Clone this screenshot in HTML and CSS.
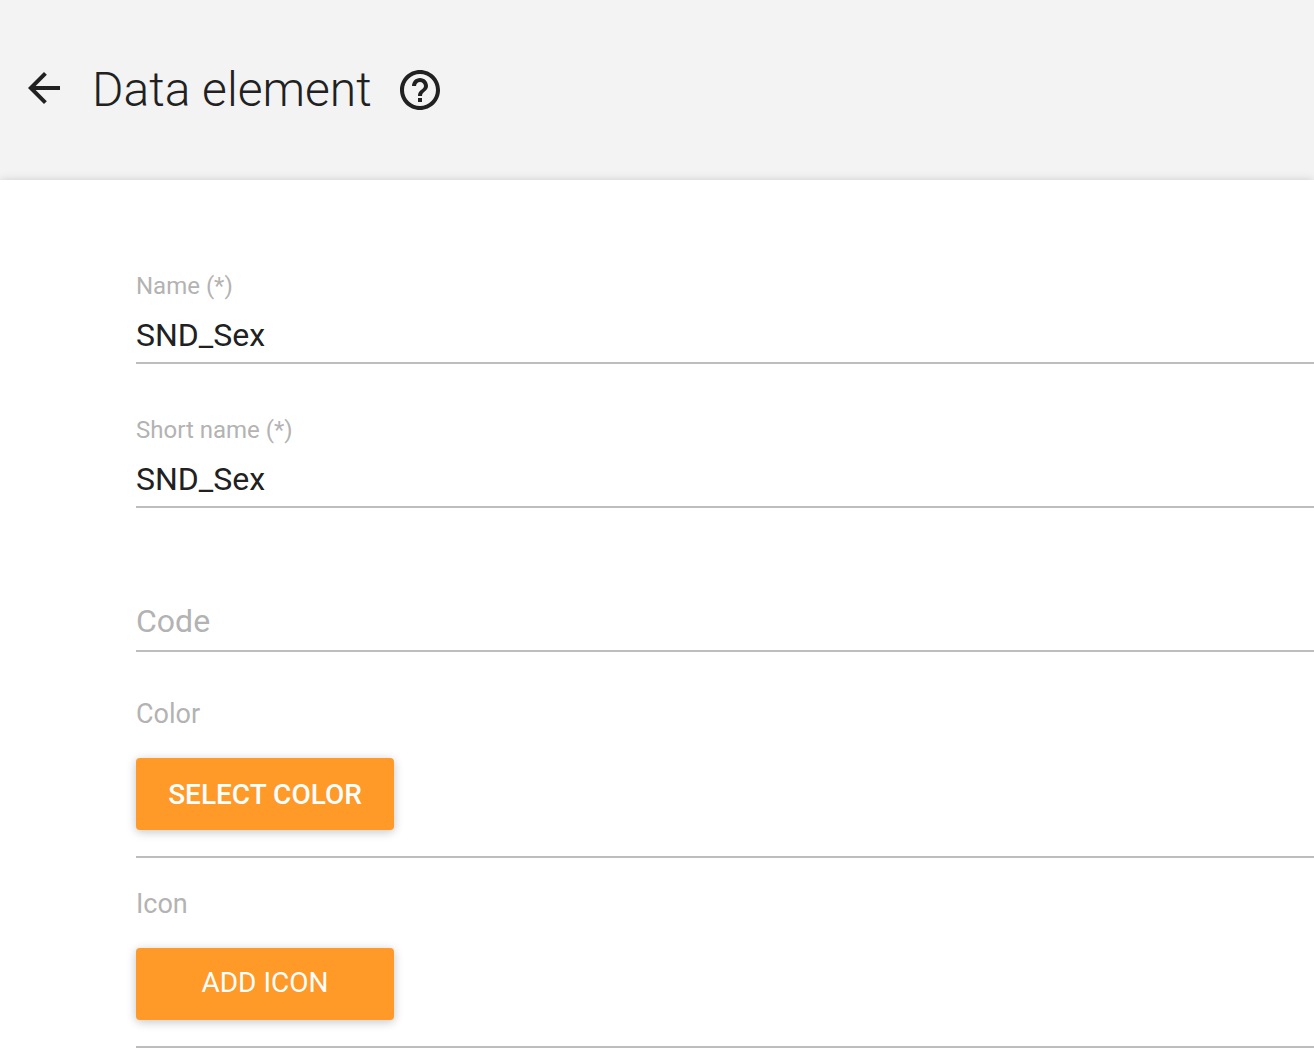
FILE: index.html
```html
<!DOCTYPE html>
<html lang="en">
<head>
<meta charset="utf-8">
<meta name="viewport" content="width=device-width, initial-scale=1">
<title>Data element</title>
<link rel="stylesheet" href="styles.css">
</head>
<body>
<header class="page-header">
  <a class="icon-link back-link" href="#" aria-label="Back">
    <svg class="icon" viewBox="0 0 24 24"><path d="M20 11H7.83l5.59-5.59L12 4l-8 8 8 8 1.41-1.41L7.83 13H20v-2z"/></svg>
  </a>
  <h1 class="page-title">Data element</h1>
  <a class="icon-link" href="#" aria-label="Help">
    <svg class="icon" viewBox="0 0 24 24"><path d="M11 18h2v-2h-2v2zm1-16C6.48 2 2 6.48 2 12s4.480 10 10 10 10-4.480 10-10S17.520 2 12 2zm0 18c-4.410 0-8-3.590-8-8s3.590-8 8-8 8 3.590 8 8-3.590 8-8 8zm0-14c-2.210 0-4 1.790-4 4h2c0-1.100.9-2 2-2s2 .9 2 2c0 2-3 1.750-3 5h2c0-2.250 3-2.500 3-5 0-2.210-1.790-4-4-4z"/></svg>
  </a>
</header>
<main class="card">
  <form>
    <div class="field">
      <label class="field-label" for="name">Name (*)</label>
      <input class="field-input" id="name" type="text" value="SND_Sex">
    </div>
    <div class="field">
      <label class="field-label" for="short-name">Short name (*)</label>
      <input class="field-input" id="short-name" type="text" value="SND_Sex">
    </div>
    <div class="field">
      <input class="field-input field-input-bare" id="code" type="text" placeholder="Code" aria-label="Code">
    </div>
    <div class="pickers">
      <div class="picker">
        <span class="picker-label" id="color-label">Color</span>
        <button class="button button-strong" type="button" aria-describedby="color-label">SELECT COLOR</button>
      </div>
      <div class="picker">
        <span class="picker-label" id="icon-label">Icon</span>
        <button class="button button-plain" type="button" aria-describedby="icon-label">ADD ICON</button>
      </div>
    </div>
  </form>
</main>
</body>
</html>
```
FILE: styles.css
```css
* {
  box-sizing: border-box;
}

body {
  margin: 0;
  background: #f3f3f3;
  color: #212121;
  font-family: Roboto, "Liberation Sans", sans-serif;
}

.page-header {
  display: flex;
  align-items: center;
  height: 180px;
  padding: 0 20px;
}

.icon-link {
  display: flex;
  color: #212121;
}

.back-link {
  padding-bottom: 4px;
}

.icon {
  width: 48px;
  height: 48px;
  fill: currentColor;
}

.page-title {
  margin: 0 24px;
  font-size: 48px;
  font-weight: 300;
  line-height: 64px;
}

.card {
  padding: 76px 0 16px 136px;
  background: #fff;
  box-shadow: 0 2px 12px rgba(0, 0, 0, 0.12), 0 2px 8px rgba(0, 0, 0, 0.12);
}

.field {
  display: flex;
  flex-direction: column;
  justify-content: flex-end;
  height: 144px;
  padding-bottom: 36px;
}

.field-label {
  color: #b3b3b3;
  font-size: 24px;
  line-height: 28px;
}

.field-input {
  width: 100%;
  height: 64px;
  padding: 8px 0 0;
  border: 0;
  border-bottom: 2px solid #bdbdbd;
  background: none;
  color: #212121;
  font: inherit;
  font-size: 32px;
}

.field-input-bare {
  padding-top: 4px;
}

.field-input::placeholder {
  color: #b3b3b3;
  opacity: 1;
}

.pickers {
  display: flex;
  flex-direction: column;
  gap: 30px;
  padding-top: 10px;
}

.picker {
  display: flex;
  flex-direction: column;
  align-items: flex-start;
  gap: 28px;
  padding-bottom: 26px;
  border-bottom: 2px solid #bdbdbd;
}

.picker-label {
  color: #b3b3b3;
  font-size: 27px;
  line-height: 32px;
}

.button {
  width: 258px;
  height: 72px;
  padding: 0;
  border: 0;
  border-radius: 4px;
  background: #ff9927;
  box-shadow: 0 2px 12px rgba(0, 0, 0, 0.12), 0 2px 8px rgba(0, 0, 0, 0.12);
  color: #fff;
  font: inherit;
  font-size: 28px;
}

.button-plain {
  padding-bottom: 4px;
}

.button-strong {
  font-weight: 500;
}
```
